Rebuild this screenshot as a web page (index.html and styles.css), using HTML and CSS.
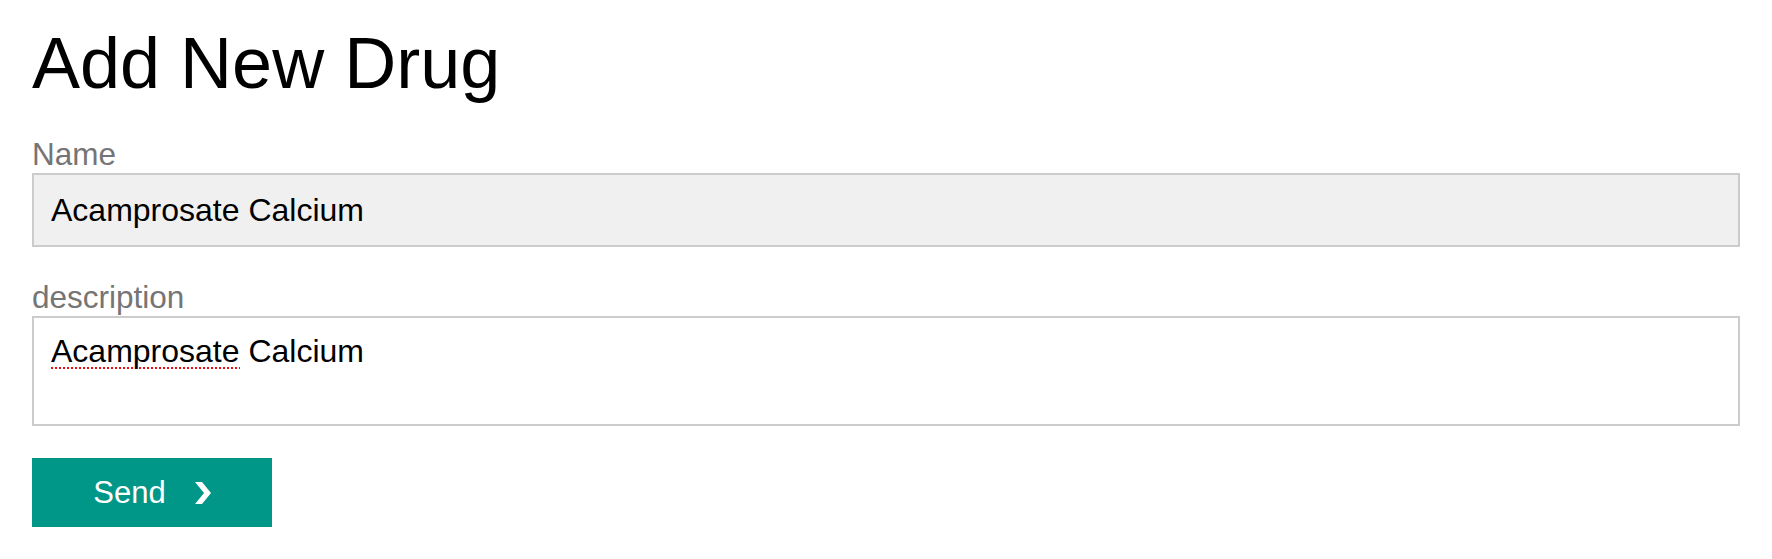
FILE: index.html
```html
<!DOCTYPE html>
<html lang="en">
<head>
<meta charset="utf-8">
<title>Add New Drug</title>
<link rel="stylesheet" href="styles.css">
</head>
<body>
<main class="page">
  <h1 class="title">Add New Drug</h1>
  <form class="form" onsubmit="return false">
    <div class="field">
      <label class="label" for="name">Name</label>
      <input class="input" id="name" type="text" value="Acamprosate Calcium">
    </div>
    <div class="field">
      <label class="label" for="description">description</label>
      <div class="textarea" id="description" role="textbox" aria-multiline="true" contenteditable="true"><span class="misspelled">Acamprosate</span> Calcium</div>
    </div>
    <button class="send" type="submit">
      <span class="send-text">Send</span>
      <svg class="chevron" width="16" height="22" viewBox="0 0 16 22" aria-hidden="true">
        <polygon points="0,0 7,0 16,11 7,22 0,22 9,11" fill="#ffffff"/>
      </svg>
    </button>
  </form>
</main>
</body>
</html>
```
FILE: styles.css
```css
* {
  box-sizing: border-box;
}

html, body {
  margin: 0;
  padding: 0;
  background: #ffffff;
}

body {
  font-family: "Liberation Sans", Arial, Helvetica, sans-serif;
  color: #000000;
}

.page {
  padding: 22px 32px 32px;
}

.title {
  margin: 0 0 32px;
  font-size: 72px;
  line-height: 82px;
  font-weight: 400;
  color: #000000;
}

.form {
  display: flex;
  flex-direction: column;
  align-items: flex-start;
}

.field {
  width: 100%;
  margin-bottom: 32px;
}

.label {
  display: block;
  font-size: 31.5px;
  line-height: 36px;
  color: #757575;
  margin-bottom: 1px;
}

.input {
  display: block;
  width: 100%;
  height: 74px;
  margin: 0;
  padding: 0 17px;
  border: 2px solid #cccccc;
  border-radius: 0;
  background: #f0f0f0;
  font-family: "Liberation Sans", Arial, Helvetica, sans-serif;
  font-size: 32px;
  line-height: 70px;
  color: #000000;
  outline: none;
}

.textarea {
  display: block;
  width: 100%;
  height: 110px;
  padding: 15px 17px;
  border: 2px solid #cccccc;
  background: #ffffff;
  font-size: 32px;
  line-height: 37px;
  color: #000000;
  outline: none;
  overflow: hidden;
}

.misspelled {
  background-image: linear-gradient(to right, #f01010 2px, transparent 2px);
  background-size: 4px 2px;
  background-repeat: repeat-x;
  background-position: 0 100%;
}

.send {
  display: flex;
  align-items: center;
  justify-content: center;
  gap: 29px;
  width: 240px;
  height: 69px;
  margin: 0;
  padding: 0;
  border: none;
  border-radius: 0;
  background: #009688;
  color: #ffffff;
  font-family: "Liberation Sans", Arial, Helvetica, sans-serif;
  font-size: 31px;
  line-height: 36px;
  cursor: pointer;
}

.send-text {
  display: block;
}

.chevron {
  display: block;
  flex: none;
}
```
